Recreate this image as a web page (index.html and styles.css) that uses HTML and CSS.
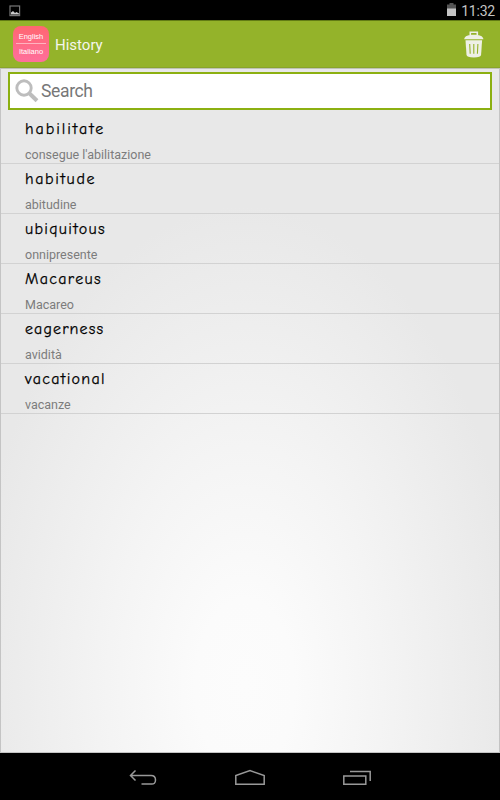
FILE: index.html
```html
<!DOCTYPE html>
<html lang="en">
<head>
	<meta charset="UTF-8">
	<title>History</title>
	<link rel="stylesheet" href="styles.css">
</head>
<body>
	<div class="status">
		<svg class="shot" width="12" height="12" viewBox="0 0 12 12">
			<rect x="1" y="1" width="9.6" height="9.6" fill="none" stroke="#777" stroke-width="1.2"/>
			<path d="M2 9.500V7.500L4 6l2 2 1.500-1L10 8.500v1z" fill="#ccc"/>
		</svg>
		<svg class="battery" width="9" height="13" viewBox="0 0 9 13">
			<path d="M2.500 0h4v1.500H9V6H0V1.500h2.500z" fill="#555"/>
			<path d="M0 5.500h9V13H0z" fill="#c4c4c4"/>
		</svg>
		<span class="clock">11:32</span>
	</div>
	<div class="bar">
		<div class="logo">
			<span>English</span>
			<span>Italiano</span>
		</div>
		<h1>History</h1>
		<svg class="trash" width="20" height="28" viewBox="0 0 20 28">
			<path d="M6.300 5V2.200h7V5" fill="none" stroke="#eef0e6" stroke-width="1.600"/>
			<path d="M.2 9.300C.2 5.800 5 4.700 9.800 4.700s9.600 1.100 9.600 4.600z" fill="#eef0e6"/>
			<path d="M1.500 10.300h16.600l-1 14.500q-.2 2.700-7.300 2.700t-7.300-2.700z" fill="#eef0e6"/>
			<path d="M5.700 14l.5 9.800M9.800 14v9.800M13.900 14l-.5 9.800" fill="none" stroke="#94b32a" stroke-width="1.100"/>
		</svg>
	</div>
	<div class="content">
		<div class="search">
			<svg width="24" height="24" viewBox="0 0 24 24" fill="none" stroke="#bdbdbd">
				<circle cx="9" cy="9" r="7.200" stroke-width="2.900"/>
				<path d="M14 14l8 7.700" stroke-width="4"/>
			</svg>
			<span>Search</span>
		</div>
		<ul class="list">
			<li><b class="w1">habilitate</b><span>consegue l'abilitazione</span></li>
			<li><b class="w2">habitude</b><span>abitudine</span></li>
			<li><b>ubiquitous</b><span>onnipresente</span></li>
			<li><b>Macareus</b><span>Macareo</span></li>
			<li><b class="w5">eagerness</b><span>avidità</span></li>
			<li><b>vacational</b><span>vacanze</span></li>
		</ul>
	</div>
	<div class="nav">
		<svg width="28" height="18" viewBox="0 0 28 18">
			<path d="M6.500 1.500L1.500 6.500l5 5M1.500 6.500h20.500q4.500 0 4.500 4.500t-4.500 4H12.500"/>
		</svg>
		<svg width="30" height="18" viewBox="0 0 30 18">
			<path d="M.8 15.300V6.500L15 1.600l14.200 4.900v8.800z"/>
		</svg>
		<svg width="28" height="18" viewBox="0 0 28 18">
			<path d="M.8 7h22v8.300H.8zM7 2.500h20.200V12"/>
		</svg>
	</div>
</body>
</html>
```
FILE: styles.css
```css
*{
	margin: 0;
	padding: 0;
	box-sizing: border-box;
}
ul,li{
	list-style: none;
}
body{
	width: 500px;
	height: 800px;
	overflow: hidden;
	background: #000;
	font-family: Roboto, sans-serif;
	display: flex;
	flex-direction: column;
}
.status{
	height: 20px;
	display: flex;
	align-items: center;
	padding: 1px 5px 0 9px;
}
.battery{
	margin-left: auto;
	margin-right: 5px;
	margin-top: -2px;
}
.clock{
	color: #c4c4c4;
	font-size: 14px;
	letter-spacing: -.2px;
	line-height: 20px;
}
.bar{
	height: 48px;
	background: #94b32a;
	border-top: 1px solid #627c14;
	border-bottom: 1px solid #89a52a;
	display: flex;
	align-items: center;
	padding: 0 16px 0 13px;
}
.logo{
	width: 36px;
	height: 36px;
	border-radius: 8px;
	background: linear-gradient(#ff6771, #ff6f9c);
	margin-right: 6px;
	padding: 0 3px;
	color: #fff;
	font: 7.5px/15px "Liberation Sans", sans-serif;
	text-align: center;
	white-space: nowrap;
}
.logo span{
	display: block;
	height: 17px;
	padding-top: 3px;
}
.logo span:last-child{
	border-top: 1px solid #ffb3c0;
	padding-top: 0;
}
.bar h1{
	color: #f4f6ec;
	font-size: 15px;
	font-weight: 400;
	padding-top: 1px;
}
.trash{
	margin-left: auto;
}
.content{
	height: 685px;
	border: 1px solid #c4c4c4;
	border-top-color: #bfc3b5;
	background: radial-gradient(ellipse 275px 480px at 244px 617px, #fcfcfc, #fbfbfb 18%, #f4f4f4 50%, #e8e8e8);
}
.search{
	height: 38px;
	margin: 3px 7px 4px;
	border: 2px solid #8cb011;
	background: #fff;
	display: flex;
	align-items: center;
	padding-left: 5px;
	color: #777;
	font-size: 17.5px;
	letter-spacing: -.35px;
}
.search span{
	margin-left: 2px;
}
.list li{
	height: 50px;
	border-bottom: 1px solid #d2d2d2;
	padding: 5px 0 0 24px;
}
.list b{
	display: block;
	height: 20px;
	font: 500 16px/20px "Comic Neue", "Comic Sans MS", Lato, sans-serif;
	color: #000;
	letter-spacing: 1.3px;
	-webkit-text-stroke: .25px #000;
}
.list .w1{
	letter-spacing: 1.95px;
}
.list .w2{
	letter-spacing: 1.6px;
}
.list .w5{
	letter-spacing: 1.1px;
}
.list span{
	display: block;
	margin-top: 8px;
	font-size: 12.5px;
	line-height: 16px;
	color: #7c7c7c;
}
.nav{
	height: 47px;
	display: flex;
	justify-content: center;
	align-items: center;
	gap: 78px;
	padding-top: 2px;
}
.nav svg{
	fill: none;
	stroke: #999;
	stroke-width: 1.5;
}
```
